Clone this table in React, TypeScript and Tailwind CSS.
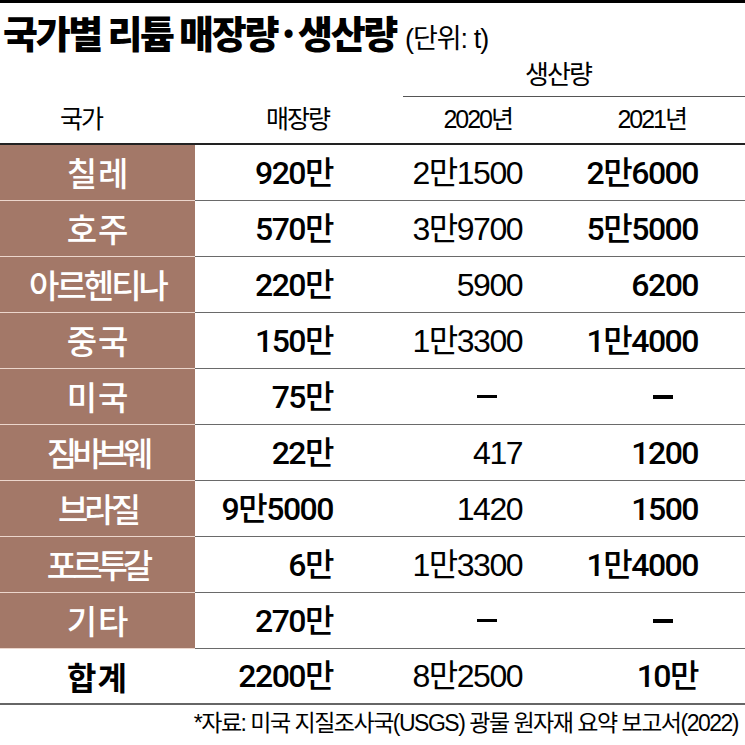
import React from 'react';

type Row = {
  country: string;
  reserve: string;
  y2020: string;
  y2021: string;
};

const rows: Row[] = [
  { country: '칠레', reserve: '920만', y2020: '2만1500', y2021: '2만6000' },
  { country: '호주', reserve: '570만', y2020: '3만9700', y2021: '5만5000' },
  { country: '아르헨티나', reserve: '220만', y2020: '5900', y2021: '6200' },
  { country: '중국', reserve: '150만', y2020: '1만3300', y2021: '1만4000' },
  { country: '미국', reserve: '75만', y2020: '-', y2021: '-' },
  { country: '짐바브웨', reserve: '22만', y2020: '417', y2021: '1200' },
  { country: '브라질', reserve: '9만5000', y2020: '1420', y2021: '1500' },
  { country: '포르투갈', reserve: '6만', y2020: '1만3300', y2021: '1만4000' },
  { country: '기타', reserve: '270만', y2020: '-', y2021: '-' },
];

const font = { fontFamily: '"Liberation Sans", "Noto Sans CJK KR", sans-serif' };
const kr = { fontFamily: '"Noto Sans CJK KR", sans-serif' };
const medium = { fontFamily: 'Roboto, "Noto Sans CJK KR", sans-serif' };
const grid = 'grid grid-cols-[195px_150px_190px_210px]';

const nameTracking = (name: string) => {
  if (name.length === 2) return 'tracking-[1px] pl-[1px]';
  if (name.length === 3) return 'tracking-[-4px]';
  if (name.length === 4) return 'tracking-[-5px]';
  return 'tracking-[-3px]';
};

const Dash = ({ bold }: { bold?: boolean }) => (
  <span className={`inline-block w-[20px] ${bold ? 'h-[4px]' : 'h-[3px]'} bg-black`} />
);

export default function App() {
  return (
    <div className="w-[745px] h-[745px] bg-white text-black overflow-hidden border-t-[3px] border-black" style={font}>
      {/* title */}
      <div className="flex items-baseline pl-[3px] pt-[10px] h-[52px]">
        <span className="text-[38px] font-black tracking-[-2.3px] leading-none" style={kr}>
          국가별 리튬 매장량·생산량
        </span>
        <span className="text-[27px] ml-[9px] tracking-[-1px] leading-none">(단위: t)</span>
      </div>

      {/* header */}
      <div className="flex">
        <div className="w-[403px]" />
        <div className="flex-1 border-b border-[#555] text-center text-[26px] tracking-[-2px] pt-[4px] pb-[4px] leading-[33px] pr-[32px]">
          생산량
        </div>
      </div>
      <div className={`${grid} h-[48px] items-center text-[25px] tracking-[-2px] border-b-2 border-[#222]`}>
        <div className="pl-[60px]">국가</div>
        <div className="text-right pr-[16px]">매장량</div>
        <div className="text-right pr-[23px]">2020년</div>
        <div className="text-right pr-[59px]">2021년</div>
      </div>

      {/* rows */}
      {rows.map((r) => (
        <div key={r.country} className={`${grid} h-[56px]`}>
          <div
            className={`bg-[#a37868] text-white flex items-center justify-center text-[33px] font-medium border-b border-[#ecd6cc] ${nameTracking(r.country)}`}
            style={kr}
          >
            {r.country}
          </div>
          <div className="flex items-center justify-end pr-[12px] text-[32px] font-medium tracking-[-1.5px] border-b border-[#6a6a6a]" style={medium}>
            {r.reserve}
          </div>
          <div className="flex items-center justify-end pr-[13px] text-[32px] tracking-[-1.5px] border-b border-[#6a6a6a]">
            {r.y2020 === '-' ? <span className="mr-[25px] flex items-center"><Dash /></span> : r.y2020}
          </div>
          <div className="flex items-center justify-end pr-[47px] text-[32px] font-medium tracking-[-1.5px] border-b border-[#6a6a6a]" style={medium}>
            {r.y2021 === '-' ? <span className="mr-[25px] flex items-center"><Dash bold /></span> : r.y2021}
          </div>
        </div>
      ))}

      {/* total */}
      <div className={`${grid} h-[56px] items-center border-b-2 border-[#666] text-[32px] tracking-[-1.5px]`}>
        <div className="text-center font-bold tracking-[1px]" style={kr}>합계</div>
        <div className="text-right pr-[12px] font-medium" style={medium}>2200만</div>
        <div className="text-right pr-[13px]">8만2500</div>
        <div className="text-right pr-[47px] font-medium" style={medium}>10만</div>
      </div>

      {/* source */}
      <div className="text-right pr-[7px] pt-[3px] text-[23px] tracking-[-1.5px] leading-[30px]">
        *자료: 미국 지질조사국(USGS) 광물 원자재 요약 보고서(2022)
      </div>
    </div>
  );
}
